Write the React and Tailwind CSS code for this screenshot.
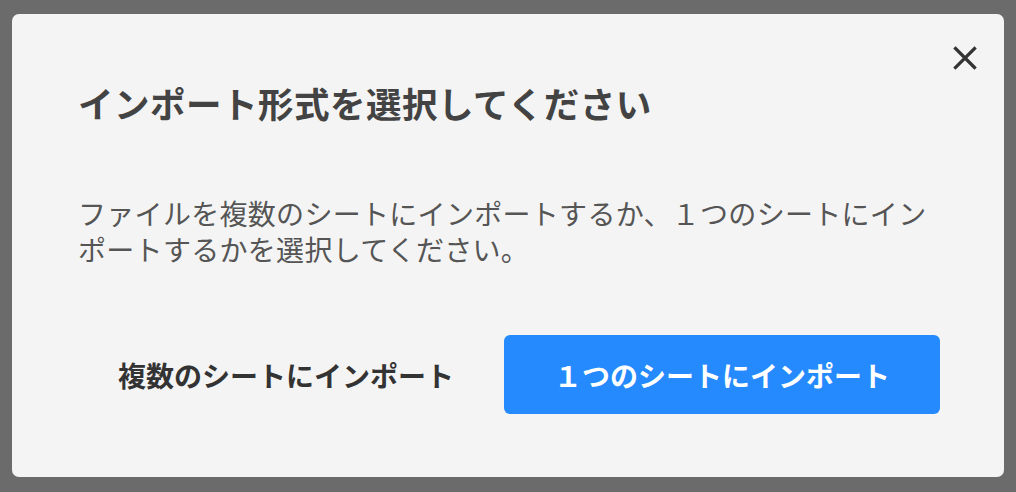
const font = { fontFamily: '"Noto Sans CJK JP", "Noto Sans", sans-serif' };

export default function App() {
  return (
    <div className="w-[1016px] h-[492px] bg-[#6b6b6b] pt-[14px] pl-[12px]" style={font}>
      <div className="relative w-[992px] h-[463px] bg-[#f4f4f4] rounded-[7px] pl-[66px] pr-[64px] pt-[65px]">
        <button className="absolute top-[31px] right-[26px] w-[26px] h-[26px] flex items-center justify-center text-[#333]">
          <svg width="24" height="24" viewBox="0 0 24 24" fill="none" stroke="currentColor" strokeWidth="3.2" strokeLinecap="square">
            <path d="M2.5 2.5 L21.5 21.5 M21.5 2.5 L2.5 21.5" />
          </svg>
        </button>

        <h1 className="text-[35.5px] leading-[48px] font-bold text-[#434343] tracking-[0.5px]">
          インポート形式を選択してください
        </h1>

        <p className="mt-[68px] text-[28px] leading-[36px] text-[#555] tracking-[0.3px] w-[862px]">
          ファイルを複数のシートにインポートするか、１つのシートにインポートするかを選択してください。
        </p>

        <div className="mt-[68px] flex items-center gap-[10px]">
          <button className="w-[416px] h-[79px] rounded-[6px] text-[28px] font-bold text-[#333]">
            複数のシートにインポート
          </button>
          <button className="w-[436px] h-[79px] rounded-[6px] bg-[#258afe] text-[28px] font-bold text-white">
            １つのシートにインポート
          </button>
        </div>
      </div>
    </div>
  );
}
